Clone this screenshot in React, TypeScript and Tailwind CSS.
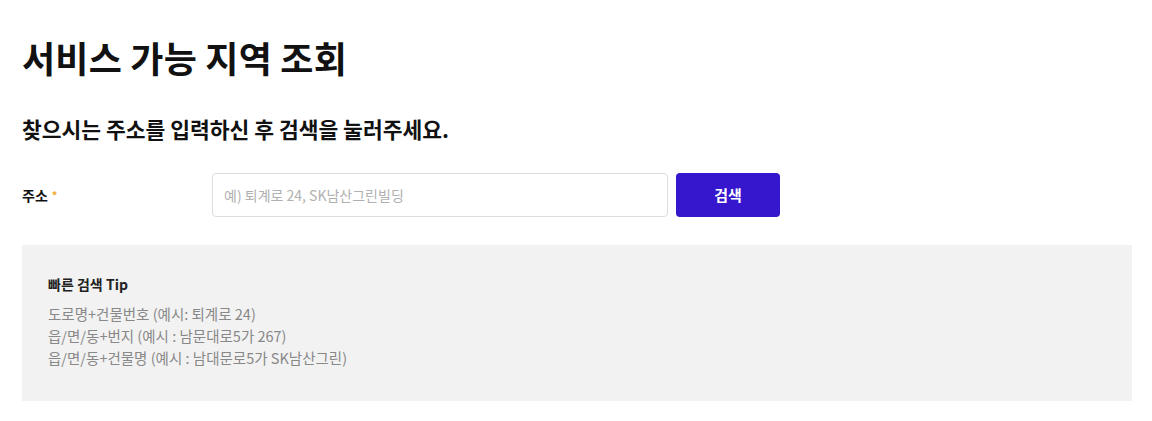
export default function App() {
  const font = { fontFamily: '"Noto Sans CJK KR", "Noto Sans", sans-serif' };
  return (
    <div className="w-[1152px] h-[421px] bg-white px-[22px] pt-[34px] text-[#111]" style={font}>
      <h1 className="text-[36px] font-bold leading-[46px] tracking-[0.2px]">서비스 가능 지역 조회</h1>
      <h2 className="mt-[34px] text-[21.5px] font-bold leading-[30px]">
        찾으시는 주소를 입력하신 후 검색을 눌러주세요.
      </h2>

      <div className="mt-[29px] flex items-center">
        <label className="w-[190px] text-[14px] font-bold flex items-center">
          주소
          <span className="text-[#f5a623] text-[11px] leading-none ml-[4px]">*</span>
        </label>
        <input
          className="w-[456px] h-[44px] rounded-[4px] border border-[#dddddd] px-[11px] text-[14px] outline-none placeholder:text-[#b0b0b0]"
          placeholder="예) 퇴계로 24, SK남산그린빌딩"
        />
        <button className="ml-[8px] w-[104px] h-[44px] rounded-[4px] bg-[#3617ce] text-white text-[15px] font-bold">
          검색
        </button>
      </div>

      <div className="mt-[28px] w-[1110px] h-[156px] bg-[#f2f2f2] px-[26px] pt-[28px]">
        <p className="text-[14px] font-bold leading-[22px] text-[#222]">빠른 검색 Tip</p>
        <ul className="mt-[8px] text-[14.5px] leading-[22px] text-[#888]">
          <li>도로명+건물번호 (예시: 퇴계로 24)</li>
          <li>읍/면/동+번지 (예시 : 남문대로5가 267)</li>
          <li>읍/면/동+건물명 (예시 : 남대문로5가 SK남산그린)</li>
        </ul>
      </div>
    </div>
  );
}
